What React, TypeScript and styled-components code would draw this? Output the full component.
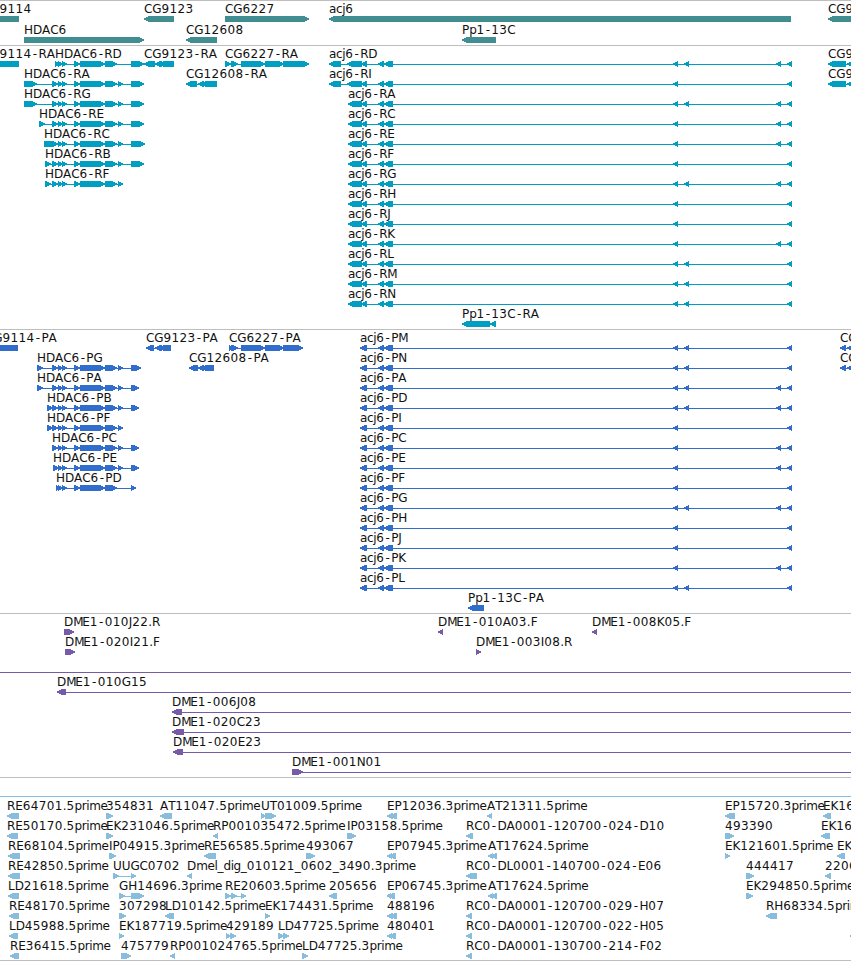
import styled, { createGlobalStyle } from "styled-components";

type Exon = [number, number];

interface Feature {
  label?: string;
  exons: Exon[];
  reverse?: boolean;
  // set when the connecting line runs past the drawn exons
  line?: Exon;
}

interface TrackData {
  name: string;
  color: string;
  rowHeight?: number;
  rows: Feature[][];
}

const VIEW_WIDTH = 851;

const fwd = (label: string, ...exons: Exon[]): Feature => ({ label, exons });
const rev = (label: string, ...exons: Exon[]): Feature => ({
  label,
  exons,
  reverse: true,
});

const hdacCore: Exon[] = [
  [58, 63],
  [62, 67],
  [74, 80],
  [80, 105],
  [105, 117],
];
const hdacMid: Exon[] = [[52, 58], ...hdacCore, [118, 123]];

const acjCore: Exon[] = [
  [378, 384],
  [384, 391],
  [387, 393],
];
const acjTail = (...starts: number[]): Exon[] =>
  [673, ...starts, 787].map((start) => [start, start + 5]);

const acjRna = (name: string, ...starts: number[]) =>
  rev(`acj6-${name}`, [348, 362], [361, 367], ...acjCore, ...acjTail(...starts));
const acjRnaLong = (name: string, ...starts: number[]) =>
  rev(
    `acj6-${name}`,
    [329, 341],
    [347, 362],
    [361, 367],
    ...acjCore,
    ...acjTail(...starts)
  );
const acjProtein = (name: string, ...starts: number[]) =>
  rev(`acj6-${name}`, [360, 367], ...acjCore, ...acjTail(...starts));

const tracks: TrackData[] = [
  {
    name: "gene",
    color: "#408d92",
    rowHeight: 21,
    rows: [
      [
        rev("CG9114", [-18, 19]),
        rev("CG9123", [144, 174]),
        fwd("CG6227", [225, 309]),
        rev("acj6", [329, 791]),
        rev("CG9056", [828, 880]),
      ],
      [
        fwd("HDAC6", [24, 144]),
        rev("CG12608", [186, 217]),
        rev("Pp1-13C", [462, 496]),
      ],
    ],
  },
  {
    name: "transcript",
    color: "#009fc1",
    rows: [
      [
        rev("CG9114-RA", [-18, 19]),
        fwd("HDAC6-RD", [55, 60], ...hdacCore, [131, 144]),
        rev("CG9123-RA", [144, 155], [155, 162], [159, 174]),
        fwd("CG6227-RA", [225, 231], [231, 238], [241, 265], [265, 284], [283, 309]),
        acjRnaLong("RD", 684, 776),
        rev("CG9056-RA", [828, 846], [847, 870]),
      ],
      [
        fwd("HDAC6-RA", [24, 37], ...hdacMid, [131, 144]),
        rev("CG12608-RA", [186, 197], [198, 204], [201, 217]),
        acjRnaLong("RI"),
        rev("CG9056-RB", [828, 846], [847, 870]),
      ],
      [fwd("HDAC6-RG", [24, 37], ...hdacMid, [131, 144]), acjRna("RA", 684, 776)],
      [fwd("HDAC6-RE", [39, 45], ...hdacMid, [131, 144]), acjRna("RC", 776)],
      [fwd("HDAC6-RC", [44, 58], ...hdacMid, [131, 145]), acjRna("RE", 776)],
      [fwd("HDAC6-RB", [45, 51], ...hdacMid, [131, 144]), acjRna("RF")],
      [fwd("HDAC6-RF", [45, 51], ...hdacMid), acjRna("RG", 684, 776)],
      [acjRna("RH")],
      [acjRna("RJ")],
      [acjRna("RK", 776)],
      [acjRna("RL", 684)],
      [acjRna("RM", 684)],
      [acjRna("RN", 684)],
      [rev("Pp1-13C-RA", [462, 490], [490, 496])],
    ],
  },
  {
    name: "protein",
    color: "#306dcd",
    rows: [
      [
        rev("CG9114-PA", [-15, 18]),
        rev("CG9123-PA", [146, 154], [155, 162], [159, 171]),
        fwd("CG6227-PA", [229, 233], [231, 238], [241, 265], [265, 284], [283, 303]),
        acjProtein("PM", 684),
        rev("CG9056-PA", [840, 846], [847, 870]),
      ],
      [
        fwd("HDAC6-PG", [37, 43], ...hdacMid, [131, 141]),
        rev("CG12608-PA", [189, 198], [198, 204], [201, 214]),
        acjProtein("PN", 684),
        rev("CG9056-PB", [840, 846], [847, 870]),
      ],
      [fwd("HDAC6-PA", [37, 43], ...hdacMid, [131, 139]), acjProtein("PA", 684, 776)],
      [fwd("HDAC6-PB", [47, 53], ...hdacMid, [131, 139]), acjProtein("PD", 684, 776)],
      [fwd("HDAC6-PF", [47, 53], ...hdacMid), acjProtein("PI")],
      [fwd("HDAC6-PC", ...hdacMid, [131, 139]), acjProtein("PC", 776)],
      [
        fwd("HDAC6-PE", [53, 59], ...hdacCore, [118, 123], [131, 139]),
        acjProtein("PE", 776),
      ],
      [fwd("HDAC6-PD", [56, 61], ...hdacCore, [131, 136]), acjProtein("PF")],
      [acjProtein("PG", 684, 776)],
      [acjProtein("PH")],
      [acjProtein("PJ")],
      [acjProtein("PK", 776)],
      [acjProtein("PL", 684)],
      [rev("Pp1-13C-PA", [468, 484])],
    ],
  },
  {
    name: "bac",
    color: "#775ba8",
    rows: [
      [
        fwd("DME1-010J22.R", [64, 74]),
        rev("DME1-010A03.F", [438, 443]),
        rev("DME1-008K05.F", [592, 597]),
      ],
      [fwd("DME1-020I21.F", [65, 75]), fwd("DME1-003I08.R", [476, 481])],
      [{ exons: [], line: [0, VIEW_WIDTH] }],
      [{ ...rev("DME1-010G15", [57, 66]), line: [60, VIEW_WIDTH] }],
      [{ ...rev("DME1-006J08", [172, 182]), line: [175, VIEW_WIDTH] }],
      [{ ...rev("DME1-020C23", [172, 184]), line: [175, VIEW_WIDTH] }],
      [{ ...rev("DME1-020E23", [173, 183]), line: [175, VIEW_WIDTH] }],
      [{ ...fwd("DME1-001N01", [292, 303]), line: [295, VIEW_WIDTH] }],
    ],
  },
  {
    name: "est",
    color: "#88bddd",
    rows: [
      [{ exons: [], line: [0, VIEW_WIDTH] }],
      [
        rev("RE64701.5prime", [7, 19]),
        fwd("354831", [106, 113]),
        rev("AT11047.5prime", [160, 172]),
        fwd("UT01009.5prime", [261, 266], [265, 276]),
        rev("EP12036.3prime", [387, 393], [390, 397]),
        rev("AT21311.5prime", [487, 492]),
        rev("EP15720.3prime", [725, 735]),
        rev("EK161303", [823, 831]),
      ],
      [
        rev("RE50170.5prime", [7, 18]),
        fwd("EK231046.5prime", [106, 113]),
        rev("RP001035472.5prime", [213, 218]),
        fwd("IP03158.5prime", [347, 356]),
        rev("RC0-DA0001-120700-024-D10", [466, 473]),
        fwd("493390", [725, 734]),
        rev("EK161303", [821, 830]),
      ],
      [
        rev("RE68104.5prime", [8, 20]),
        fwd("IP04915.3prime", [109, 116]),
        rev("RE56585.5prime", [204, 216]),
        fwd("493067", [306, 315]),
        rev("EP07945.3prime", [387, 392], [389, 396]),
        rev("AT17624.5prime", [488, 493], [491, 497]),
        fwd("EK121601.5prime", [725, 730]),
        rev("EK", [837, 845]),
      ],
      [
        rev("RE42850.5prime", [8, 20]),
        fwd("UUGC0702", [113, 119], [131, 136]),
        rev("Dmel_dig_010121_0602_3490.3prime", [187, 192]),
        rev("RC0-DL0001-140700-024-E06", [466, 477]),
        fwd("444417", [746, 754]),
        rev("2206", [825, 831]),
      ],
      [
        rev("LD21618.5prime", [8, 19]),
        fwd("GH14696.3prime", [119, 125], [131, 144]),
        fwd("RE20603.5prime", [225, 231], [231, 237], [241, 246]),
        rev("205656", [329, 337]),
        rev("EP06745.3prime", [387, 391], [388, 395]),
        rev("AT17624.5prime", [488, 493], [491, 497]),
        fwd("EK294850.5prime", [746, 753]),
      ],
      [
        rev("RE48170.5prime", [9, 19]),
        fwd("307298", [119, 126]),
        rev("LD10142.5prime", [165, 174]),
        fwd("EK174431.5prime", [265, 270]),
        rev("488196", [387, 393], [390, 397]),
        rev("RC0-DA0001-120700-029-H07", [466, 472]),
        rev("RH68334.5prime", [766, 777]),
      ],
      [
        rev("LD45988.5prime", [9, 18]),
        fwd("EK187719.5prime", [119, 124]),
        fwd("429189", [226, 231], [230, 236]),
        fwd("LD47725.5prime", [278, 284], [283, 289]),
        rev("480401", [387, 392], [389, 396]),
        rev("RC0-DA0001-120700-022-H05", [466, 472]),
        { exons: [[850, 856]], reverse: true },
      ],
      [
        rev("RE36415.5prime", [10, 19]),
        fwd("475779", [121, 131]),
        rev("RP001024765.5prime", [170, 175]),
        fwd("LD47725.3prime", [302, 308]),
        rev("RC0-DA0001-130700-214-F02", [466, 472]),
      ],
    ],
  },
];

// per-character nudges, so labels keep an even, grid-like rhythm
const spacingAfter = (char: string) => {
  if (char === "-") return 1.3;
  if (char === "M") return -1.2;
  if (/\d/.test(char)) return 0.36;
  if (/[a-z]/.test(char)) return -0.4;
  if (/[A-Z]/.test(char)) return -0.15;
  return 0;
};

const labelOffsets = (label: string) =>
  label
    .split("")
    .map((char, i) => {
      const before = char === "-" ? 1.3 : 0;
      return (before + (i > 0 ? spacingAfter(label[i - 1]) : 0)).toFixed(2);
    })
    .join(" ");

// the arrow tip is one pixel blunt, which keeps it crisp on the line
const exonPath = ([start, end]: Exon, reverse?: boolean) => {
  const tip = Math.min(5, end - start);
  return reverse
    ? `M${start} 16.4L${start + tip} 14H${end}V20H${start + tip}L${start} 17.6Z`
    : `M${end} 16.4L${end - tip} 14H${start}V20H${end - tip}L${end} 17.6Z`;
};

function FeatureGlyph({ label, exons, reverse, line }: Feature) {
  const span: Exon | undefined =
    line ??
    (exons.length > 1 ? [exons[0][0] + 2, exons[exons.length - 1][1] - 2] : undefined);

  return (
    <g>
      {span && <rect x={span[0]} y={17} width={span[1] - span[0]} height={1} />}
      {exons.map((exon, i) => (
        <path key={i} d={exonPath(exon, reverse)} />
      ))}
      {label && (
        <Label x={exons[0][0] + 0.1} y={11} dx={labelOffsets(label)}>
          {label}
        </Label>
      )}
    </g>
  );
}

export default function App() {
  return (
    <>
      <GlobalStyle />
      <Browser>
        {tracks.map((track) => (
          <Track key={track.name} $color={track.color}>
            {track.rows.map((features, i) => (
              <Row
                key={i}
                width={VIEW_WIDTH}
                height={track.rowHeight ?? 20}
                shapeRendering="crispEdges"
              >
                {features.map((feature, j) => (
                  <FeatureGlyph key={j} {...feature} />
                ))}
              </Row>
            ))}
          </Track>
        ))}
      </Browser>
    </>
  );
}

const GlobalStyle = createGlobalStyle`
  body {
    margin: 0;
    background-color: #ffffff;
  }
`;

const Browser = styled.main`
  width: 851px;
  height: 961px;
  box-sizing: border-box;
  display: flex;
  flex-direction: column;
  overflow: hidden;
  border-bottom: 1px solid #bebebe;
`;

const Track = styled.section<{ $color: string }>`
  display: flex;
  flex-direction: column;
  flex-shrink: 0;
  padding: 1px 0 2px;
  border-top: 1px solid #bebebe;
  color: ${({ $color }) => $color};

  &:first-child {
    padding-bottom: 1px;
  }

  &:last-child {
    padding-bottom: 0;
  }
`;

const Row = styled.svg`
  display: block;
  flex-shrink: 0;
  overflow: visible;
  fill: currentColor;
`;

const Label = styled.text`
  fill: #111111;
  font-family: "DejaVu Sans", sans-serif;
  font-size: 12px;
  font-kerning: none;
`;
